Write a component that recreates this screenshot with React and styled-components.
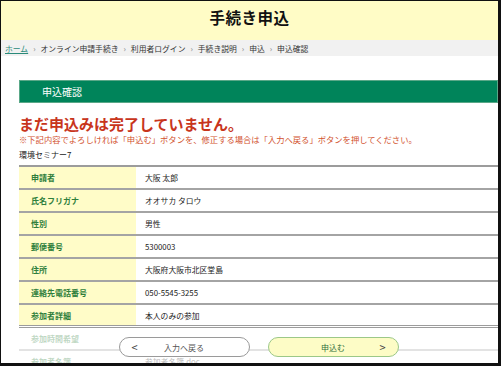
import React from "react";
import styled, { createGlobalStyle } from "styled-components";

const GlobalStyle = createGlobalStyle`
  html, body {
    margin: 0;
    padding: 0;
    background: #ffffff;
  }
  body {
    font-family: "Noto Sans CJK JP", "Noto Sans", sans-serif;
  }
`;

const Frame = styled.div`
  position: relative;
  box-sizing: border-box;
  width: 501px;
  height: 366px;
  overflow: hidden;
  border-style: solid;
  border-color: #111;
  border-width: 1px 3px 3px 1px;
  background: #fff;
`;

const Header = styled.header`
  height: 39px;
  background: #fffcc6;
  display: flex;
  justify-content: center;
  padding-top: 5px;
  box-sizing: border-box;

  h1 {
    margin: 0;
    font-size: 15.5px;
    line-height: 22px;
    font-weight: 700;
    color: #111;
    letter-spacing: 0.5px;
  }
`;

const Crumbs = styled.nav`
  height: 16px;
  background: #f1f1f1;
  display: flex;
  align-items: center;
  padding-left: 4px;
  font-size: 7.8px;
  color: #333;

  a {
    color: #2a8a7a;
    text-decoration: underline;
  }

  span.sep {
    color: #888;
    margin: 0 5px;
  }
`;

const Content = styled.main`
  padding: 24px 0 0 18px;
`;

const SectionBar = styled.div`
  height: 23px;
  background: #00845a;
  border: 1px solid #5aa888;
  box-sizing: border-box;
  display: flex;
  align-items: center;
  padding-left: 22px;
  color: #fff;
  font-size: 10px;
`;

const Warning = styled.h2`
  margin: 12px 0 0;
  font-size: 15px;
  line-height: 17px;
  font-weight: 700;
  color: #c8351c;
`;

const Note = styled.p`
  margin: 1px 0 0;
  font-size: 8.3px;
  line-height: 12px;
  color: #d2522e;
`;

const Seminar = styled.p`
  margin: 4px 0 0;
  font-size: 8px;
  line-height: 12px;
  color: #222;
`;

const Table = styled.div`
  margin-top: 4px;
  border-top: 2px solid #9c9c9c;
`;

const Row = styled.div`
  display: grid;
  grid-template-columns: 117px 1fr;
  height: 23px;
  box-sizing: border-box;
  border-bottom: ${(p) => (p.double ? "3px double #9c9c9c" : "2px solid #a4a4a4")};
  opacity: ${(p) => (p.faded ? 0.3 : 1)};
`;

const Label = styled.div`
  background: ${(p) => (p.faded ? "#ffffff" : "#fffcc8")};
  color: #2f7f3c;
  font-weight: 700;
  font-size: 8px;
  display: flex;
  align-items: center;
  padding-left: 12px;
`;

const Value = styled.div`
  color: #222;
  font-size: 7.8px;
  display: flex;
  align-items: center;
  padding-left: 9px;
`;

const ActionBar = styled.div`
  position: absolute;
  left: 0;
  right: 0;
  bottom: 0;
  height: 32px;
  display: flex;
  justify-content: center;
  gap: 18px;
  padding: 6px 0 0 18px;
  box-sizing: border-box;
`;

const PillButton = styled.button`
  width: 131px;
  height: 20px;
  border-radius: 10px;
  border: 1px solid ${(p) => (p.primary ? "#9cc888" : "#9a9a9a")};
  background: ${(p) => (p.primary ? "#fdfcc6" : "#ffffff")};
  color: ${(p) => (p.primary ? "#2f6f3a" : "#555")};
  font-family: inherit;
  font-size: 8px;
  display: flex;
  align-items: center;
  justify-content: space-between;
  padding: 0 10px;
  box-sizing: border-box;

  .arrow {
    font-size: 11px;
    color: #444;
    width: 10px;
  }
`;

const rows = [
  ["申請者", "大阪 太郎"],
  ["氏名フリガナ", "オオサカ タロウ"],
  ["性別", "男性"],
  ["郵便番号", "5300003"],
  ["住所", "大阪府大阪市北区堂島"],
  ["連絡先電話番号", "050-5545-3255"],
];

const crumbs = ["オンライン申請手続き", "利用者ログイン", "手続き説明", "申込", "申込確認"];

export default function App() {
  return (
    <>
      <GlobalStyle />
      <Frame>
        <Header>
          <h1>手続き申込</h1>
        </Header>
        <Crumbs>
          <a>ホーム</a>
          {crumbs.map((c) => (
            <React.Fragment key={c}>
              <span className="sep">›</span>
              <span>{c}</span>
            </React.Fragment>
          ))}
        </Crumbs>
        <Content>
          <SectionBar>申込確認</SectionBar>
          <Warning>まだ申込みは完了していません。</Warning>
          <Note>※下記内容でよろしければ「申込む」ボタンを、修正する場合は「入力へ戻る」ボタンを押してください。</Note>
          <Seminar>環境セミナー7</Seminar>
          <Table>
            {rows.map(([k, v]) => (
              <Row key={k}>
                <Label>{k}</Label>
                <Value>{v}</Value>
              </Row>
            ))}
            <Row double>
              <Label>参加者詳細</Label>
              <Value>本人のみの参加</Value>
            </Row>
            <Row faded>
              <Label faded>参加時間希望</Label>
              <Value></Value>
            </Row>
            <Row faded>
              <Label faded>参加者名簿</Label>
              <Value>参加者名簿.doc</Value>
            </Row>
          </Table>
        </Content>
        <ActionBar>
          <PillButton>
            <span className="arrow">&lt;</span>
            <span>入力へ戻る</span>
            <span className="arrow" />
          </PillButton>
          <PillButton primary>
            <span className="arrow" />
            <span>申込む</span>
            <span className="arrow">&gt;</span>
          </PillButton>
        </ActionBar>
      </Frame>
    </>
  );
}
